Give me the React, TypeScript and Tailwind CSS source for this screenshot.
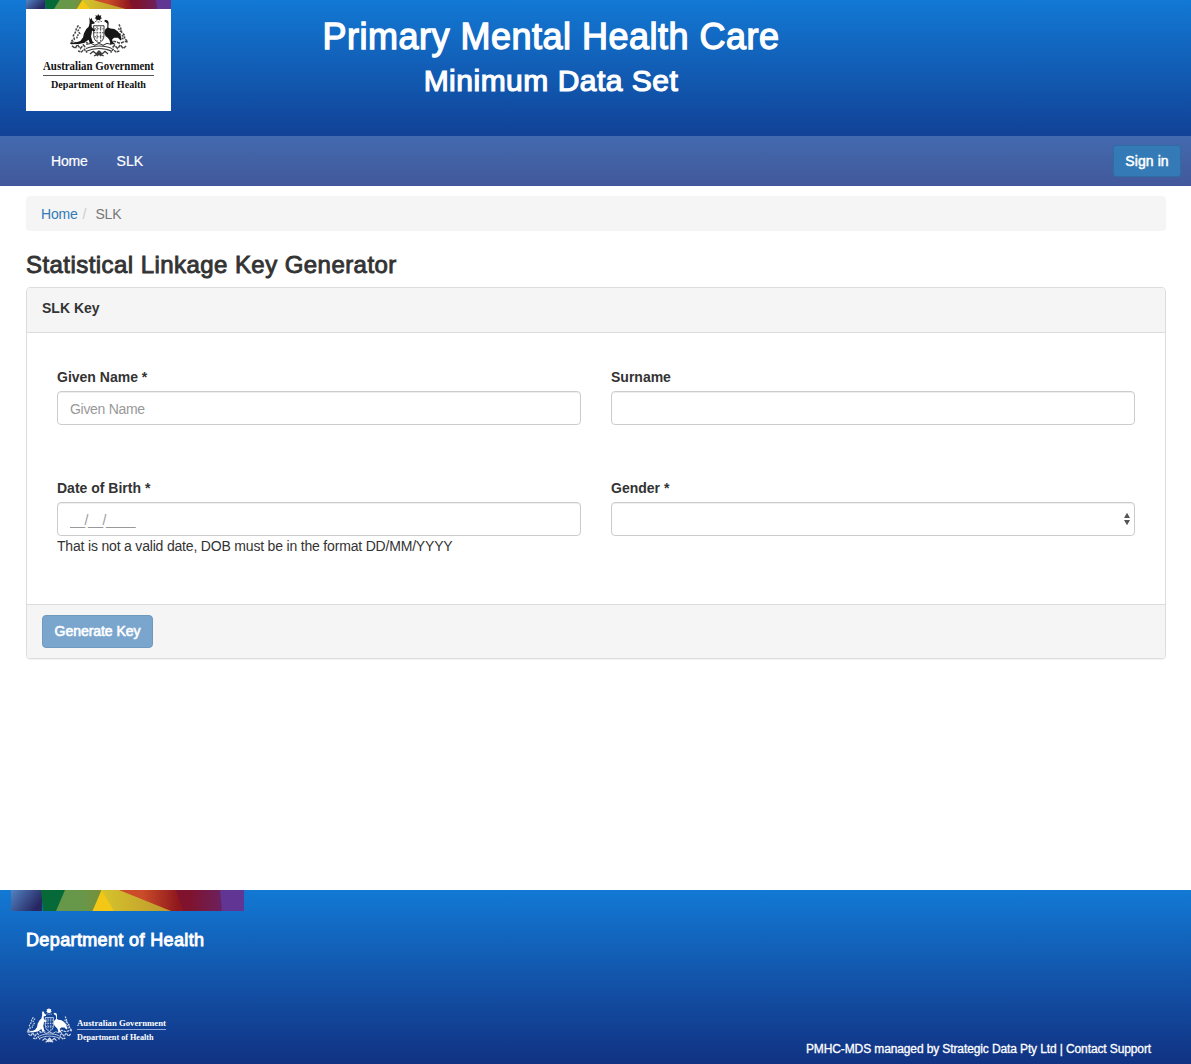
import React from "react";

const sans = "font-['Liberation_Sans',Arial,sans-serif]";

function CoatOfArms({ x, y, width, height }: { x: number; y: number; width: number; height: number }) {
  return (
    <svg x={x} y={y} width={width} height={height} viewBox="28 12 180 128" preserveAspectRatio="none" fill="currentColor" stroke="none">
      <path d="M116 12l3 5 6-1-2 5 4 4-5 2v5l-6-3-6 3v-5l-5-2 4-4-2-5 6 1z" />
      <path d="M106 33h4v3h-4zM114 34h5v3h-5zM123 33h4v3h-4z" opacity=".7" />
      {/* kangaroo */}
      <path d="M89 22l4 6 3-5 2 8 7 6-1 4-8 1v9l5 6 6 2-1 4-9-1-1 8-2 8 4 15 6 5H90l-3-9-7 4-8 5-18 3-20 1-4-3 18-2 14-5 8-10 3-13 7-12 7-7 3-12z" />
      {/* emu */}
      <path d="M133 33l5-4 7 3 2 7-1 13 6 3 12 2 10 6 8 10 4 14-3 4-8-8-12 0-6 6 3 7 7 6h-16l1-4-3-9-5-6-6-5-4-9 2-10 7-7V40z" />
      <g fill="none" stroke="currentColor">
        {/* shield */}
        <path d="M102 47h31v27c0 13-6 20-15 24-10-4-16-11-16-24z" strokeWidth="2.500" />
        <path d="M104 56h27M103 68h29M104 80h27M112 49v43M123 49v43" strokeWidth="3" strokeDasharray="5 3" opacity=".75" />
        {/* wattle branches */}
        <g strokeWidth="4.500" opacity=".8">
          <path d="M56 46l-6 10-3 11-6 9 3 11-9 5" strokeDasharray="7 3" />
          <path d="M62 51l-7 11 5 8-9 8 2 9" strokeDasharray="5 4" />
          <path d="M178 43l5 11 3 12 8 9 1 11 8 6" strokeDasharray="7 3" />
          <path d="M176 55l7 7-3 9 10 7-1 10" strokeDasharray="5 4" />
          <path d="M33 97c11-7 17 7 28 1s15-3 24 1M204 96c-12-7-18 7-29 1s-16-3-22 1" strokeDasharray="9 3" />
          <path d="M37 107l10 7 6-11 9 12 9-11 8 9M199 107l-8 8-9-11-8 11-9-10-8 9" strokeDasharray="10 3" />
          <path d="M55 122l10 3 9-8 8 10M179 122l-10 3-9-8-7 10" strokeDasharray="8 2" />
        </g>
        {/* motto scroll */}
        <path d="M80 103l14-4 11 6 13-5 13 5 11-6 13 4M79 115c16-8 28-8 39-8s25 0 39 8M80 123c15-7 27-8 38-8s24 1 38 8" strokeWidth="3" opacity=".85" />
        <path d="M91 131l10-8 9 8 8-9 9 9 9-8 9 8M103 137l15-8 14 8M112 125l12 12M124 125l-12 12" strokeWidth="4" opacity=".85" />
      </g>
    </svg>
  );
}

function HeaderLogo() {
  return (
    <svg width="145" height="102" viewBox="0 0 145 102" className="block bg-white text-[#161616]">
      <CoatOfArms x={43} y={5} width={60} height={43} />
      <g fontFamily="'Liberation Serif', 'Times New Roman', serif" fontWeight="700" fill="#111" textAnchor="middle">
        <text x="72.500" y="60.500" fontSize="11.500" textLength="111" lengthAdjust="spacingAndGlyphs">Australian Government</text>
        <text x="72.500" y="78.500" fontSize="10.500" textLength="95" lengthAdjust="spacingAndGlyphs">Department of Health</text>
      </g>
      <path d="M17 66.500h111" stroke="#555" strokeWidth="1" />
    </svg>
  );
}

function FooterLogo() {
  return (
    <svg width="145" height="36" viewBox="0 0 145 36" className="block text-white">
      <CoatOfArms x={0} y={0} width={47} height={35} />
      <g fontFamily="'Liberation Serif', 'Times New Roman', serif" fontWeight="700" fill="#fff">
        <text x="51" y="17.500" fontSize="9" textLength="89" lengthAdjust="spacingAndGlyphs">Australian Government</text>
        <text x="51" y="32" fontSize="8.500" textLength="76.500" lengthAdjust="spacingAndGlyphs">Department of Health</text>
      </g>
      <path d="M51 21.500h89" stroke="#8fa9da" strokeWidth="1" />
    </svg>
  );
}

function ColourStrip({ id, className, viewBox }: { id: string; className: string; viewBox: string }) {
  return (
    <svg className={className} viewBox={viewBox} preserveAspectRatio="none">
      <defs>
        <linearGradient id={id + "a"} x1="0" y1="0" x2="1" y2="0.500"><stop stopColor="#5283c2" /><stop offset="1" stopColor="#262661" /></linearGradient>
        <linearGradient id={id + "b"}><stop offset=".5" stopColor="#67984a" /><stop offset="1" stopColor="#7d8c35" /></linearGradient>
        <linearGradient id={id + "c"}><stop stopColor="#d6c42b" /><stop offset="1" stopColor="#bd962f" /></linearGradient>
        <linearGradient id={id + "d"}><stop offset=".35" stopColor="#cb4c28" /><stop offset=".9" stopColor="#8f171d" /></linearGradient>
        <linearGradient id={id + "e"}><stop offset=".3" stopColor="#7f132d" /><stop offset="1" stopColor="#6b215f" /></linearGradient>
      </defs>
      <path d="M0 0h31v21H0z" fill={"url(#" + id + "a)"} />
      <path d="M30 0h26v21H32z" fill="#056a38" />
      <path d="M54 0h42v21H45z" fill={"url(#" + id + "b)"} />
      <path d="M90 0h30l42 21h-62z" fill={"url(#" + id + "c)"} />
      <path d="M90.500 0L103 21H81.500z" fill="#f3c716" />
      <path d="M108 0h60l6 21h-14z" fill={"url(#" + id + "d)"} />
      <path d="M165 0h46v21h-39z" fill={"url(#" + id + "e)"} />
      <path d="M209 0h24v21h-22z" fill="#613594" />
    </svg>
  );
}

const inputClass =
  "block h-[34px] w-full rounded border border-[#ccc] bg-white px-3 pt-[2px] text-sm text-[#555] shadow-[inset_0_1px_1px_rgba(0,0,0,0.075)] outline-none placeholder:text-[#999]";

function Field({ label, children }: { label: string; children: React.ReactNode }) {
  return (
    <label className="block">
      <span className="mb-1 block text-sm leading-5 font-bold">{label}</span>
      {children}
    </label>
  );
}

export default function App() {
  return (
    <div className={"flex min-h-[1064px] w-full flex-col bg-white text-sm leading-5 text-[#333] " + sans}>
      <header className="flex h-[136px] bg-linear-to-b from-[#1279d4] to-[#114297] pl-[26px]">
        <div className="w-[145px]">
          <ColourStrip id="top" className="block h-[9px] w-[145px]" viewBox="0 0 233 21" />
          <HeaderLogo />
        </div>
        <div className="ml-[105px] w-[550px] text-center text-white">
          <h1 className="mt-[17px] text-[36px] leading-10 tracking-[0.500px] [-webkit-text-stroke:1.300px_white]">Primary Mental Health Care</h1>
          <h2 className="mt-[7px] text-[30px] leading-[33px] tracking-[0.500px] [-webkit-text-stroke:1.200px_white]">Minimum Data Set</h2>
        </div>
      </header>

      <nav className="flex h-[50px] items-center bg-linear-to-b from-[#436aaf] to-[#42589b] pr-[10px] pl-[51px] text-white">
        <a className="tracking-[-0.200px] [-webkit-text-stroke:0.200px_white]">Home</a>
        <a className="ml-[29px] [-webkit-text-stroke:0.200px_white]">SLK</a>
        <button className="mt-[9px] ml-auto h-8 w-[68px] self-start rounded-[3px] border border-[#2e6da4] bg-[#337ab7] pb-px text-sm leading-5 tracking-[0.100px] [-webkit-text-stroke:0.500px_white]">Sign in</button>
      </nav>

      <main className="pt-2.5 pr-[25px] pl-[26px]">
        <div className="flex h-[35px] items-center rounded bg-[#f5f5f5] px-[15px] pt-px">
          <a className="tracking-[-0.200px] text-[#337ab7]">Home</a>
          <span className="mx-[5px] text-[#ccc]">/</span>
          <span className="ml-[4px] tracking-[-0.200px] text-[#777]">SLK</span>
        </div>
        <h3 className="mt-5 text-2xl leading-[27px] tracking-[0.440px] [-webkit-text-stroke:0.900px_#333]">Statistical Linkage Key Generator</h3>

        <section className="mt-[9px] overflow-hidden rounded border border-[#ddd] shadow-[0_1px_1px_rgba(0,0,0,0.05)]">
          <div className="h-[45px] border-b border-[#ddd] bg-[#f5f5f5] px-[15px] pt-2.5 font-bold">SLK Key</div>
          <div className="grid h-[271px] grid-cols-2 grid-rows-[111px_auto] gap-x-[30px] px-[30px] pt-[34px]">
            <Field label="Given Name *">
              <input className={inputClass + " tracking-[-0.300px]"} placeholder="Given Name" />
            </Field>
            <Field label="Surname">
              <input className={inputClass} />
            </Field>
            <div>
              <Field label="Date of Birth *">
                <input className={inputClass + " tracking-[-0.500px]"} placeholder="__/__/____" />
              </Field>
              <p className="tracking-[-0.185px]">That is not a valid date, DOB must be in the format DD/MM/YYYY</p>
            </div>
            <Field label="Gender *">
              <span className="relative block">
                <select className={inputClass + " appearance-none"} />
                <svg className="pointer-events-none absolute top-[10px] right-[5px] h-[14px] w-[6px]" viewBox="0 0 6 14" fill="#555">
                  <path d="M3 .8L6 6H0zM3 13.200L6 8H0z" />
                </svg>
              </span>
            </Field>
          </div>
          <div className="h-[54px] border-t border-[#ddd] bg-[#f5f5f5] px-[15px] pt-2.5">
            <button className="block h-[33px] w-[111px] rounded border border-[#7099be] bg-[#7aa6ce] pb-[2px] text-sm leading-5 tracking-[-0.050px] text-white [-webkit-text-stroke:0.600px_white]">Generate Key</button>
          </div>
        </section>
      </main>

      <footer className="mt-auto flex h-[174px] flex-col bg-linear-to-b from-[#1279d4] to-[#113283] text-white">
        <ColourStrip id="bottom" className="ml-[11px] block h-[21px] w-[233px] shrink-0" viewBox="0 0 233 21" />
        <h4 className="mt-[19px] ml-[26px] text-lg leading-5 tracking-[0.370px] [-webkit-text-stroke:0.900px_white]">Department of Health</h4>
        <div className="mt-[58px] flex justify-between pr-10 pl-[26px]">
          <FooterLogo />
          <p className="mt-[31px] text-xs leading-5 tracking-[-0.115px] [-webkit-text-stroke:0.300px_white]">PMHC-MDS managed by Strategic Data Pty Ltd | Contact Support</p>
        </div>
      </footer>
    </div>
  );
}
